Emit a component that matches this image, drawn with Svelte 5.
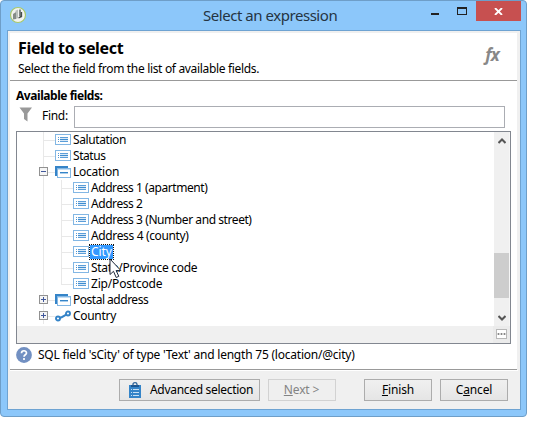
<script>
  const rows = [
    { label: 'Salutation', depth: 1, icon: 'field', tracking: -0.4 },
    { label: 'Status', depth: 1, icon: 'field', tracking: -0.45 },
    { label: 'Location', depth: 1, icon: 'folder', toggle: 'minus', tracking: -0.25 },
    { label: 'Address 1 (apartment)', depth: 2, icon: 'field', tracking: -0.44 },
    { label: 'Address 2', depth: 2, icon: 'field', tracking: -0.44 },
    { label: 'Address 3 (Number and street)', depth: 2, icon: 'field', tracking: -0.43 },
    { label: 'Address 4 (county)', depth: 2, icon: 'field', tracking: -0.36 },
    { label: 'City', depth: 2, icon: 'field', selected: true, tracking: -0.1 },
    { label: 'State/Province code', depth: 2, icon: 'field', tracking: -0.28 },
    { label: 'Zip/Postcode', depth: 2, icon: 'field', last: true, tracking: -0.18 },
    { label: 'Postal address', depth: 1, icon: 'folder', toggle: 'plus', tracking: -0.49 },
    { label: 'Country', depth: 1, icon: 'link', toggle: 'plus', tracking: -0.3 }
  ];
</script>

<div class="window">
  <header class="titlebar">
    <svg class="logo" width="18" height="18" viewBox="0 0 18 18">
      <circle cx="9" cy="9" r="7.5" fill="#f2f3f0" stroke="#a9c96a" stroke-width="1.2" />
      <path d="M4 8l3-2v7l-3 .5z" fill="#858c88" />
      <path d="M6 5l3-1.500v8.500l-2 1V6z" fill="#b9bfbb" />
      <path d="M11 3.500v7M12.500 6v4.500l-3 1.500" fill="none" stroke="#454d4b" stroke-width="1.3" />
    </svg>
    <h1>Select an expression</h1>
    <svg class="controls" width="45" height="20" viewBox="0 0 45 20" shape-rendering="crispEdges">
      <rect x="1" y="12" width="8" height="2" fill="#222" />
      <path fill-rule="evenodd" fill="#222" d="M27 6h10v8H27zM28 8v5h8V8z" />
    </svg>
    <button class="close" aria-label="Close">
      <svg width="9" height="7" viewBox="0 0 9 7"><path d="M1 0l7 7M8 0L1 7" stroke="#fff" stroke-width="1.8" /></svg>
    </button>
  </header>

  <main class="client">
    <section class="heading">
      <div>
        <h2>Field to select</h2>
        <p>Select the field from the list of available fields.</p>
      </div>
      <span class="fx">fx</span>
    </section>

    <section class="body">
      <div class="caption">Available fields:</div>
      <div class="find">
        <svg width="14" height="15" viewBox="0 0 14 15"><path d="M0.500 0.500h12.500L8.500 6.500V14.500L5 12V6.500z" fill="#999" /></svg>
        <label for="find">Find:</label>
        <input id="find" type="text" />
      </div>

      <div class="tree">
        <div class="view">
          <ul>
            {#each rows as row}
              <li class:last={row.last}>
                {#if row.depth === 2}<i class="guide outer"></i>{/if}
                <i class="guide"></i>
                {#if row.toggle}
                  <svg class="toggle" width="9" height="9" viewBox="0 0 9 9" shape-rendering="crispEdges">
                    <rect x=".5" y=".5" width="8" height="8" fill="#f5f5f5" stroke="#919191" />
                    <path d={row.toggle === 'plus' ? 'M2 4h5v1H2zM4 2h1v5H4z' : 'M2 4h5v1H2z'} fill="#40579b" />
                  </svg>
                {/if}
                <svg class="icon" width="16" height="12" viewBox="0 0 16 12">
                  {#if row.icon === 'field'}
                    <rect x=".5" y=".5" width="15" height="10" fill="#fff" stroke="#83b7e4" />
                    <path d="M3 3h1v1H3zM5 3h8v1H5zM3 7h1v1H3zM5 7h8v1H5z" fill="#5c9ed8" />
                    <path d="M3 5h1v1H3zM5 5h8v1H5z" fill="#3f8dd0" />
                    <path d="M5 4h8v1H5zM5 6h8v1H5z" fill="#d7e8f7" />
                  {:else if row.icon === 'folder'}
                    <path d="M0 0h13v2H2v8H0z" fill="#3584c8" />
                    <rect x="2.500" y="2.500" width="13" height="9" fill="#fff" stroke="#83b7e4" />
                    <path d="M3 3h12v1H3z" fill="#c5def3" />
                    <path d="M5 6h8v1H5z" fill="#3584c8" />
                    <path d="M5 7h8v1H5z" fill="#a9cdec" />
                  {:else}
                    <path d="M4 8C7 7.500 8 6.500 12 4" fill="none" stroke="#3584c8" stroke-width="2" />
                    <circle cx="3" cy="8.500" r="2" fill="#fff" stroke="#3584c8" stroke-width="1.900" />
                    <circle cx="13" cy="3.500" r="2" fill="#fff" stroke="#3584c8" stroke-width="1.900" />
                  {/if}
                </svg>
                <span class:selected={row.selected} style:letter-spacing="{row.tracking}px">{row.label}</span>
              </li>
            {/each}
          </ul>
          <div class="scroll">
            <svg width="8" height="6" viewBox="0 0 8 6"><path d="M.5 5L4 1.500L7.500 5" fill="none" stroke="#555" stroke-width="2" /></svg>
            <div class="thumb"></div>
            <svg width="8" height="6" viewBox="0 0 8 6"><path d="M.5 1L4 4.500L7.500 1" fill="none" stroke="#555" stroke-width="2" /></svg>
          </div>
        </div>
        <div class="bottom">
          <div class="corner">
            <svg width="11" height="10" viewBox="0 0 11 10" shape-rendering="crispEdges"><path d="M0 0h11v10H0z" fill="#b8b8b8" /><path d="M1 1h9v8H1z" fill="#fff" /><path d="M1 4h9v2H1z" fill="#d4d4d4" /><path d="M2 4h1v2H2zM5 4h1v2H5zM8 4h1v2H8z" fill="#888" /></svg>
          </div>
        </div>
        <svg class="pointer" width="13" height="21" viewBox="0 0 13 21"><path d="M1 1v15.500l3.500-3.200 2.700 6.200 2.600-1.200-2.700-5.800h4.700z" fill="#fff" stroke="#222b3c" /></svg>
      </div>

      <div class="status">
        <svg width="16" height="16" viewBox="0 0 16 16"><circle cx="8" cy="8" r="7.900" fill="#7290c2" /><path d="M5.500 6.200C5.500 3 10.500 3 10.500 6C10.500 7.800 8 7.800 8 9.800M8 11v2" fill="none" stroke="#fff" stroke-width="1.700" /></svg>
        <span>SQL field 'sCity' of type 'Text' and length 75 (location/@city)</span>
      </div>
    </section>

    <footer>
      <button class="advanced">
        <svg width="12" height="16" viewBox="0 0 12 16"><path d="M0 3h12v13H0z" fill="#3584c8" /><path d="M2 3h8v2H2z" fill="#1c5590" /><path d="M4 3.500V2.200C4 .2 8 .2 8 2.200V3.500" fill="none" stroke="#2a6299" stroke-width="1.300" /><path d="M2 7.500h1M4 7.500h6M2 10.500h1M4 10.500h6M2 13.500h1M4 13.500h6" stroke="#c8e0f4" /></svg>
        <span>Advanced selection</span>
      </button>
      <button class="next" disabled><span><u>N</u>ext &gt;</span></button>
      <button class="finish"><span><u>F</u>inish</span></button>
      <button class="cancel"><span>C<u>a</u>ncel</span></button>
    </footer>
  </main>
</div>

<style>
  :global(body) { background: #fff; }
  .window, .window * { box-sizing: border-box; }
  .window {
    width: 527px; height: 417px; padding: 0 6px 6px; overflow: hidden;
    border: 1px solid #6e9ec8; border-radius: 4px; background: #8cc7fa;
    font: 12px/16px "Noto Sans", "Open Sans", sans-serif; color: #000;
  }
  h1, h2, p, ul { margin: 0; padding: 0; font-weight: 400; }
  svg { display: block; flex: none; }
  .titlebar { height: 29px; display: flex; align-items: flex-start; }
  .logo { margin: 5px 0 0 2px; }
  h1 { width: 136px; margin: 3px 0 0 176px; font-size: 15px; line-height: 22px; letter-spacing: -.46px; white-space: nowrap; color: #253442; }
  .controls { margin: 0 0 0 91px; }
  .close { width: 45px; height: 20px; margin-left: auto; margin-right: -1px; padding: 1px 0 0; border: 0; display: grid; place-items: center; background: #c75050; }
  .client { width: 514px; height: 380px; padding: 2px 2px 0; border: 1px solid #6ea3d2; background: #f0f0f0; display: flex; flex-direction: column; }
  .heading { width: 507px; height: 48px; padding: 5px 17px 0 8px; background: #fff; border-bottom: 1px solid #999; display: flex; justify-content: space-between; }
  h2 { font-size: 16px; line-height: 21px; font-weight: 700; letter-spacing: -.34px; white-space: nowrap; }
  p { margin-top: 1px; line-height: 18px; letter-spacing: -.33px; white-space: nowrap; }
  .fx { margin: 5px 1px 0 0; color: #888; font: italic 700 17px/24px "Open Sans", sans-serif; letter-spacing: -.8px; }
  .body { height: 289px; width: 507px; padding: 7px 6px 0; background: #fff; border-bottom: 1px solid #999; }
  .caption { line-height: 16px; font-weight: 700; letter-spacing: -.45px; }
  .find { height: 23px; margin: 2px 0 2px; display: flex; align-items: flex-start; }
  .find svg { margin: 1px 0 0 3px; }
  .find label { width: 32px; margin: 2px 0 0 9px; letter-spacing: -.3px; }
  .find input { width: 431px; height: 22px; border: 1px solid #abadb3; border-radius: 0; padding: 0; }
  .tree { position: relative; width: 495px; height: 213px; border: 1px solid #828790; }
  .view { height: 194px; display: flex; overflow: hidden; }
  ul { flex: 1; list-style: none; }
  li { height: 16px; padding-left: 22px; display: flex; align-items: center; position: relative; }
  .guide { width: 16px; height: 16px; margin-left: 0; background: linear-gradient(#e8e8e8, #e8e8e8) 4px 0 / 1px 16px no-repeat, linear-gradient(#e8e8e8, #e8e8e8) 5px 8px / 11px 1px no-repeat; }
  .guide.outer { width: 18px; background: linear-gradient(#e8e8e8, #e8e8e8) 4px 0 / 1px 16px no-repeat; }
  .last .guide:not(.outer) { background-size: 1px 9px, 11px 1px; }
  .toggle { position: absolute; left: 22px; top: 3px; }
  li .icon { margin: 0 1px 0 0; }
  li span { height: 14px; padding: 0 1px; line-height: 14px; white-space: nowrap; }
  .selected { outline: 1px dotted #111; outline-offset: 0; background: #3399ff; color: #fff; }
  .scroll { width: 16px; padding: 6px 1px 5px 0; background: linear-gradient(90deg, #f0f0f0 15px, #f6f6f6 15px); display: flex; flex-direction: column; align-items: center; }
  .thumb { width: 15px; height: 45px; margin-top: auto; margin-bottom: 17px; background: #cdcdcd; }
  .bottom { height: 17px; background: #f0f0f0; display: flex; justify-content: flex-end; }
  .corner { width: 17px; padding: 3px 0 0 3px; background: #ebebeb; }
  .pointer { position: absolute; left: 92px; top: 126px; }
  .status { margin-top: 3px; display: flex; align-items: center; }
  .status span { margin-left: 6px; letter-spacing: -.22px; white-space: nowrap; }
  footer { flex: 1; padding: 8px 9px 0 109px; border-top: 1px solid #fff; display: flex; align-items: flex-start; }
  footer button { height: 22px; padding: 0; border: 1px solid #acacac; background: linear-gradient(#f0f0f0, #e5e5e5); color: #000; font: inherit; display: flex; align-items: center; justify-content: center; }
  footer span { margin-top: -1px; letter-spacing: -.15px; white-space: nowrap; }
  .advanced { width: 141px; justify-content: flex-start; padding-left: 9px; }
  .advanced span { margin-left: 9px; letter-spacing: -.3px; }
  .next { width: 68px; margin-left: 8px; padding-right: 1px; border-color: #d2d2d2; background: #efefef; color: #838383; }
  .finish { width: 68px; margin-left: 28px; }
  .cancel { width: 68px; margin-left: 8px; }
</style>
